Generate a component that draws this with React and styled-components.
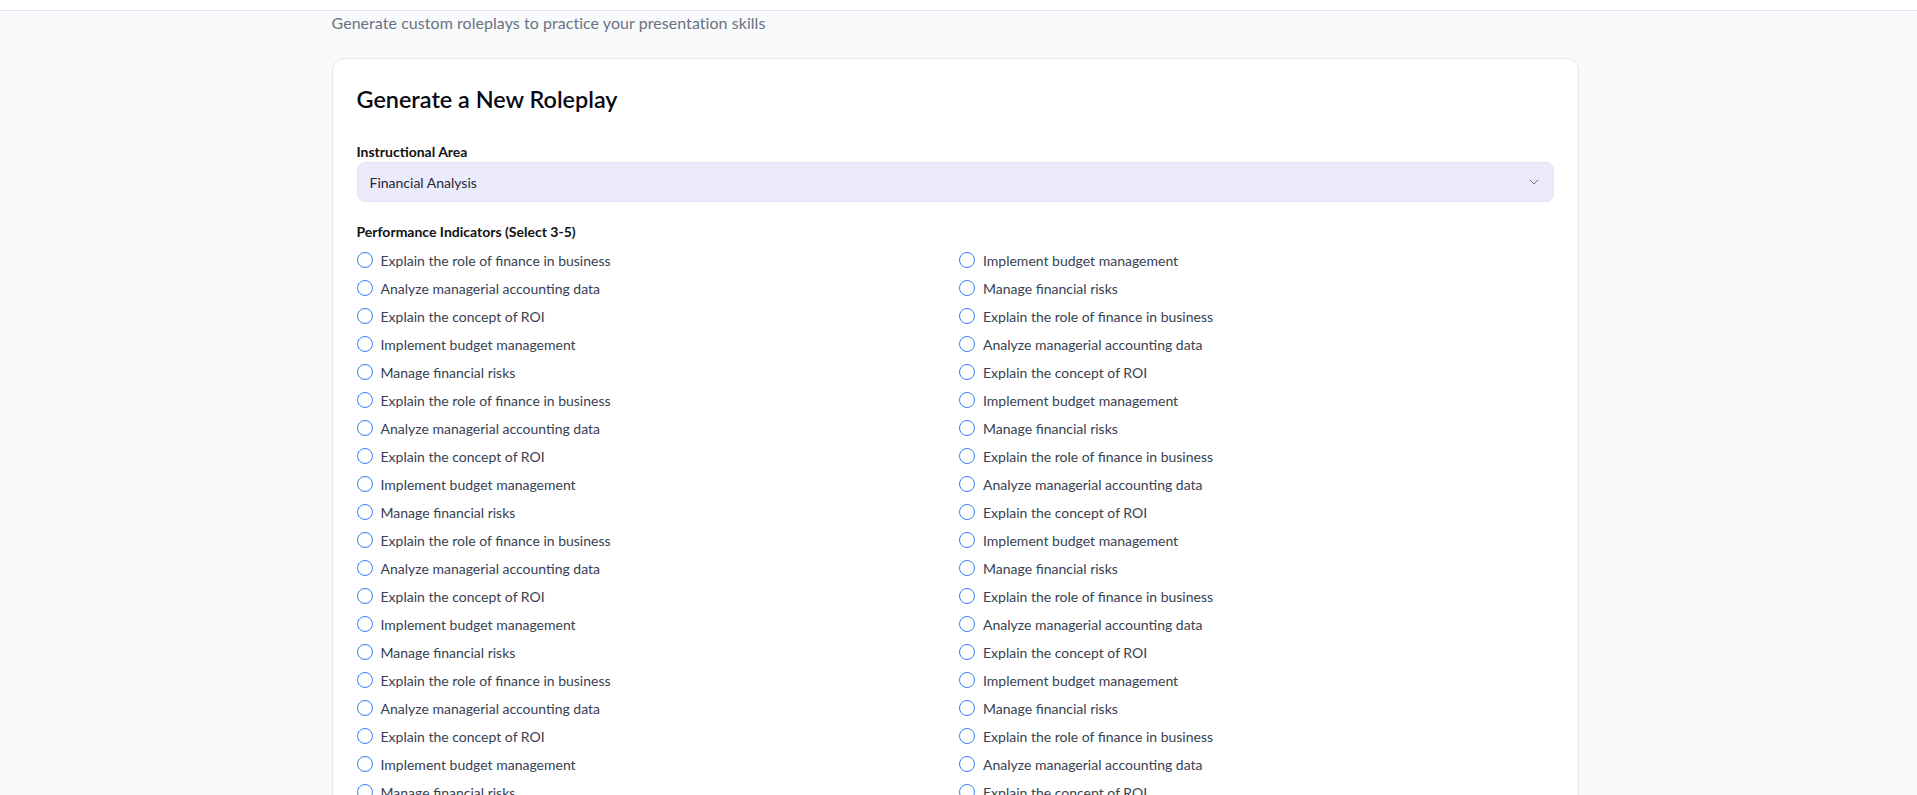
import React from "react";
import styled, { createGlobalStyle } from "styled-components";
import { ChevronDown } from "lucide-react";

const GlobalStyle = createGlobalStyle`
  * { box-sizing: border-box; }
  body {
    margin: 0;
    background: #f8fafc;
    font-family: Lato, "Liberation Sans", sans-serif;
    color: #111827;
  }
`;

const TopBar = styled.header`
  height: 11px;
  background: #ffffff;
  border-bottom: 1px solid #e2e5f0;
`;

const Main = styled.main`
  max-width: 1280px;
  margin: 0 auto;
  padding: 0 20px 0 13px;
`;

const Subtitle = styled.p`
  margin: 0 0 23px;
  font-size: 16px;
  line-height: 24px;
  letter-spacing: 0.05px;
  color: #6b7280;
`;

const Card = styled.section`
  background: #ffffff;
  border: 1px solid #e5e7eb;
  border-radius: 12px;
  padding: 24px;
`;

const Title = styled.h2`
  margin: 0 0 27px;
  font-size: 23.4px;
  line-height: 32px;
  font-weight: 600;
  color: #0a0a14;
`;

const Label = styled.div`
  font-size: 14px;
  line-height: 20px;
  font-weight: 700;
  color: #111;
  margin-bottom: ${(p) => p.$gap || 0}px;
`;

const Select = styled.button`
  width: 100%;
  height: 40px;
  display: flex;
  align-items: center;
  justify-content: space-between;
  padding: 0 11px 0 12px;
  background: #ecebfc;
  border: 1px solid #e3e2f5;
  border-radius: 8px;
  font: inherit;
  font-size: 14px;
  color: #1f2937;
  margin: 0 0 20px;
  cursor: pointer;

  svg {
    color: #6b7280;
  }
`;

const Grid = styled.div`
  display: grid;
  grid-template-columns: 1fr 1fr;
  gap: 8px;
`;

const Option = styled.label`
  display: flex;
  align-items: center;
  gap: 8px;
  height: 20px;
  font-size: 14px;
  color: #374151;
  cursor: pointer;
`;

const Radio = styled.span`
  width: 16px;
  height: 16px;
  flex-shrink: 0;
  border-radius: 50%;
  border: 1.6px solid #3b7cf2;
  background: #fff;
`;

const cycle = [
  "Explain the role of finance in business",
  "Implement budget management",
  "Analyze managerial accounting data",
  "Manage financial risks",
  "Explain the concept of ROI",
];

const indicators = Array.from({ length: 50 }, (_, i) => cycle[i % 5]);

export default function App() {
  return (
    <>
      <GlobalStyle />
      <TopBar />
      <Main>
        <Subtitle>Generate custom roleplays to practice your presentation skills</Subtitle>
        <Card>
          <Title>Generate a New Roleplay</Title>
          <Label>Instructional Area</Label>
          <Select type="button">
            <span>Financial Analysis</span>
            <ChevronDown size={16} strokeWidth={1.5} />
          </Select>
          <Label $gap={8}>Performance Indicators (Select 3-5)</Label>
          <Grid>
            {indicators.map((text, i) => (
              <Option key={i}>
                <Radio />
                {text}
              </Option>
            ))}
          </Grid>
        </Card>
      </Main>
    </>
  );
}
